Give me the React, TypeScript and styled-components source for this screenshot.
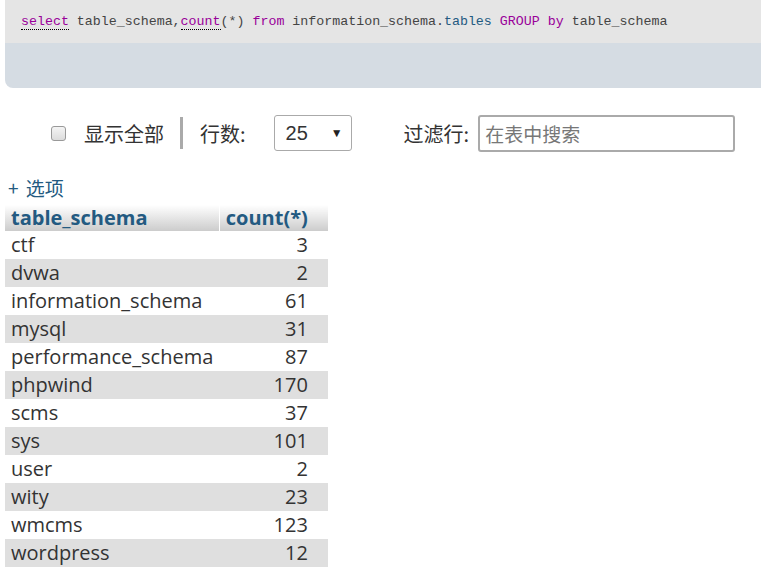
import styled, { createGlobalStyle } from "styled-components";

const GlobalStyle = createGlobalStyle`
  html, body {
    margin: 0;
    padding: 0;
    background: #fff;
    overflow: hidden;
  }
  body {
    font-family: "Open Sans", "Noto Sans CJK SC", sans-serif;
    color: #333;
  }
`;

const Page = styled.div`
  width: 761px;
  height: 588px;
  padding-left: 5px;
  box-sizing: border-box;
  overflow: hidden;
`;

const QueryBox = styled.div`
  margin-right: -20px;
  border-radius: 0 0 8px 8px;
  overflow: hidden;
  background: #d5dce3;
`;

const QueryCode = styled.div`
  height: 43px;
  box-sizing: border-box;
  padding: 13px 0 0 16px;
  background: #e5e5e5;
  font-family: "Liberation Mono", "DejaVu Sans Mono", monospace;
  font-size: 13.3px;
  line-height: 18px;
  color: #444;
  white-space: pre;
`;

const QueryFooter = styled.div`
  height: 45px;
`;

const Keyword = styled.span<{ $dotted?: boolean }>`
  color: #990099;
  ${(p) => (p.$dotted ? "border-bottom: 1px dotted #000;" : "")}
`;

const Name = styled.span`
  color: #235a81;
`;

const Toolbar = styled.div`
  display: flex;
  align-items: center;
  height: 36px;
  margin-top: 27px;
  padding-left: 46px;
  font-family: "Noto Sans CJK SC", sans-serif;
  font-size: 20px;
  color: #333;
`;

const CheckBox = styled.span`
  width: 13px;
  height: 13px;
  border: 1px solid #999;
  border-radius: 3px;
  background: linear-gradient(#f4f4f4, #dcdcdc);
  margin-right: 18px;
`;

const Divider = styled.span`
  width: 3px;
  height: 32px;
  background: #aaa;
  margin: 0 17px 0 16px;
`;

const Select = styled.div`
  display: flex;
  align-items: center;
  justify-content: space-between;
  width: 78px;
  height: 36px;
  box-sizing: border-box;
  border: 1px solid #aaa;
  border-radius: 3px;
  padding: 0 8px 0 11px;
  margin-left: 28px;
  font-family: "Liberation Sans", Arial, sans-serif;
  font-size: 20px;
  color: #333;
`;

const Arrow = styled.span`
  font-size: 12px;
  color: #222;
`;

const FilterLabel = styled.span`
  margin-left: 52px;
  margin-right: 9px;
`;

const SearchInput = styled.div`
  width: 257px;
  height: 37px;
  box-sizing: border-box;
  border: 2px solid #aaa;
  border-radius: 3px;
  padding: 0 5px;
  display: flex;
  align-items: center;
  color: #777;
  font-size: 19px;
`;

const OptionsLink = styled.div`
  margin-top: 23px;
  padding-left: 3px;
  height: 31px;
  font-family: "Noto Sans CJK SC", sans-serif;
  font-size: 19px;
  line-height: 28px;
  color: #235a81;
  word-spacing: 3px;
`;

const Table = styled.table`
  border-collapse: collapse;
  font-family: "Open Sans", "Liberation Sans", sans-serif;
  font-size: 20px;
  color: #333;
`;

const HeadCell = styled.th<{ $right?: boolean }>`
  height: 26px;
  padding: 0 ${(p) => (p.$right ? "20px" : "6px")} 0 6px;
  text-align: ${(p) => (p.$right ? "right" : "left")};
  font-weight: bold;
  color: #235a81;
  background: linear-gradient(#fff, #ccc);
  border-left: ${(p) => (p.$right ? "1px solid #fff" : "none")};
  line-height: 26px;
  width: ${(p) => (p.$right ? "81px" : "199px")};
`;

const Row = styled.tr<{ $even: boolean }>`
  background: ${(p) => (p.$even ? "#dfdfdf" : "#fff")};
`;

const Cell = styled.td<{ $right?: boolean }>`
  height: 28px;
  padding: 0 ${(p) => (p.$right ? "20px" : "6px")} 0 6px;
  text-align: ${(p) => (p.$right ? "right" : "left")};
  line-height: 28px;
`;

const rows: [string, number][] = [
  ["ctf", 3],
  ["dvwa", 2],
  ["information_schema", 61],
  ["mysql", 31],
  ["performance_schema", 87],
  ["phpwind", 170],
  ["scms", 37],
  ["sys", 101],
  ["user", 2],
  ["wity", 23],
  ["wmcms", 123],
  ["wordpress", 12],
];

export default function App() {
  return (
    <>
      <GlobalStyle />
      <Page>
        <QueryBox>
          <QueryCode>
            <Keyword $dotted>select</Keyword> table_schema,
            <Keyword $dotted>count</Keyword>(*) <Keyword>from</Keyword>{" "}
            information_schema.<Name>tables</Name> <Keyword>GROUP</Keyword>{" "}
            <Keyword>by</Keyword> table_schema
          </QueryCode>
          <QueryFooter />
        </QueryBox>

        <Toolbar>
          <CheckBox />
          <span>显示全部</span>
          <Divider />
          <span>行数:</span>
          <Select>
            <span>25</span>
            <Arrow>▼</Arrow>
          </Select>
          <FilterLabel>过滤行:</FilterLabel>
          <SearchInput>在表中搜索</SearchInput>
        </Toolbar>

        <OptionsLink>+ 选项</OptionsLink>

        <Table>
          <thead>
            <tr>
              <HeadCell>table_schema</HeadCell>
              <HeadCell $right>count(*)</HeadCell>
            </tr>
          </thead>
          <tbody>
            {rows.map(([name, count], i) => (
              <Row key={name} $even={i % 2 === 1}>
                <Cell>{name}</Cell>
                <Cell $right>{count}</Cell>
              </Row>
            ))}
          </tbody>
        </Table>
      </Page>
    </>
  );
}
